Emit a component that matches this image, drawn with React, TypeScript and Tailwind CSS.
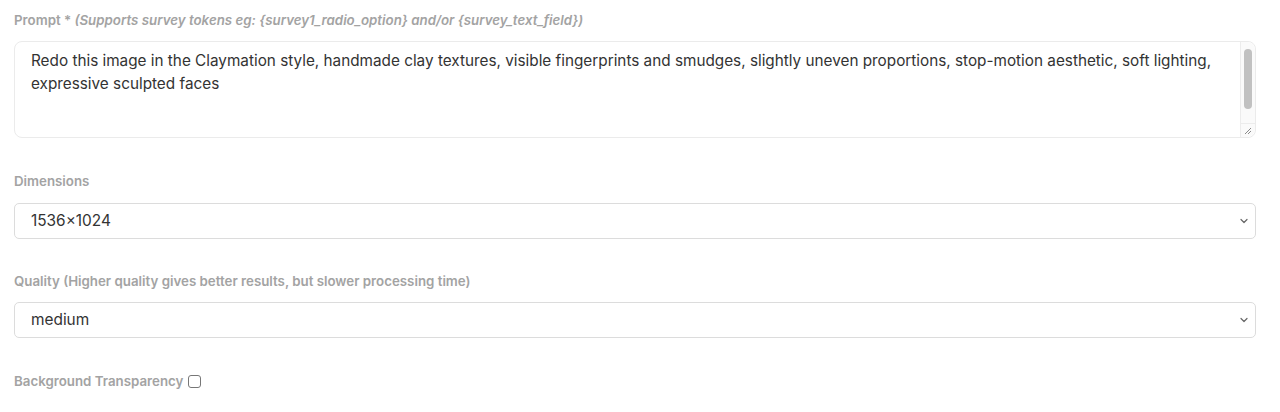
import React from 'react';

const labelCls = "block text-[13.3px] font-semibold text-[#a3a3a3] leading-[20px]";

const Chevron = () => (
  <svg width="10" height="10" viewBox="0 0 10 10" className="text-[#666]">
    <path d="M2 3.5 L5 6.5 L8 3.5" fill="none" stroke="currentColor" strokeWidth="1.2" strokeLinecap="round" strokeLinejoin="round" />
  </svg>
);

const SelectBox = ({ value }: { value: string }) => (
  <div className="flex items-center justify-between h-[36px] rounded-[5px] border border-[#dcdcdc] bg-white pl-[16px] pr-[6px]">
    <span className="text-[15.4px] text-[#333]">{value}</span>
    <Chevron />
  </div>
);

export default function App() {
  return (
    <div className="min-h-[412px] bg-white px-[14px] pr-[24px] pt-[10px]" style={{ fontFamily: 'Inter, "Noto Sans", sans-serif' }}>
      <div>
        <label className={labelCls}>
          Prompt * <i className="font-semibold">(Supports survey tokens eg: {'{survey1_radio_option}'} and/or {'{survey_text_field}'})</i>
        </label>
        <div className="relative mt-[11px] h-[97px] rounded-[8px] border border-[#ebebeb] bg-white">
          <p className="pl-[16px] pr-[40px] pt-[7px] text-[15.3px] leading-[23px] text-[#333]">
            Redo this image in the Claymation style, handmade clay textures, visible fingerprints and smudges, slightly uneven proportions, stop-motion aesthetic, soft lighting, expressive sculpted faces
          </p>
          <div className="absolute right-0 top-0 bottom-0 w-[15px] border-l border-[#ececec] bg-[#fafafa] rounded-r-[8px]">
            <div className="mx-auto mt-[7px] h-[60px] w-[8px] rounded-full bg-[#c1c1c1]" />
            <div className="absolute bottom-0 left-0 right-0 h-[14px] border-t border-[#ececec] flex items-center justify-center">
              <svg width="8" height="8" viewBox="0 0 8 8">
                <path d="M7 1 L1 7 M7 4 L4 7" stroke="#8a8a8a" strokeWidth="1" />
              </svg>
            </div>
          </div>
        </div>
      </div>

      <div className="mt-[33px]">
        <label className={labelCls}>Dimensions</label>
        <div className="mt-[12px]">
          <SelectBox value="1536×1024" />
        </div>
      </div>

      <div className="mt-[32px]">
        <label className={labelCls}>Quality (Higher quality gives better results, but slower processing time)</label>
        <div className="mt-[11px]">
          <SelectBox value="medium" />
        </div>
      </div>

      <div className="mt-[33px] flex items-center">
        <label className={labelCls}>Background Transparency</label>
        <span className="ml-[5px] inline-block h-[13px] w-[13px] rounded-[3px] border border-[#777] bg-white" />
      </div>
    </div>
  );
}
